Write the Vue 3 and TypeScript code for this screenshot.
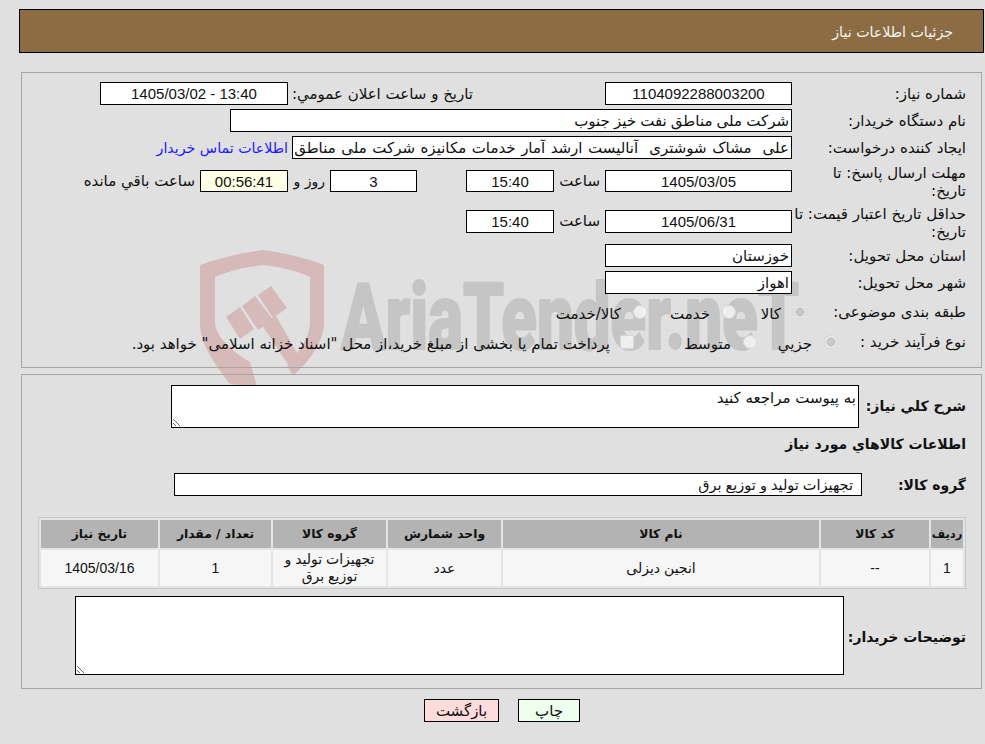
<script setup lang="ts">
const items = [
  { id: '1', code: '--', name: 'انجین دیزلی', unit: 'عدد', group: 'تجهیزات تولید و توزیع برق', qty: '1', date: '1405/03/16' },
]
const columns = ['ردیف', 'کد کالا', 'نام کالا', 'واحد شمارش', 'گروه کالا', 'تعداد / مقدار', 'تاریخ نیاز']
const widths = [32, 108, 316, 113, 113, 111, 117]
const requester = 'علی  مشاک شوشتری  آنالیست ارشد آمار خدمات مکانیزه شرکت ملی مناطق نفت خیز جنوب'
</script>

<template>
  <div class="page" dir="rtl">
    <svg class="mark" viewBox="0 0 985 744" width="985" height="744" aria-hidden="true">
      <path fill="#d6b9b9" fill-rule="evenodd" d="M263 250C285 253 306 258 324 265V325C322 345 308 362 293 376L287 366C299 352 310 338 310 322V277C295 270 280 267 263 265C246 267 231 270 215 277V322C215 336 232 352 250 362L257 387L230 384C215 365 201 345 200 325V265C220 258 241 253 263 250Z" />
      <path fill="#d6b9b9" d="M226 317L240 307L254 329L240 339ZM242 306L255 296L273 320L258 330ZM258 295L271 286L287 308L273 318ZM262 325L276 316L300 358L293 372Z" />
      <text x="341" y="349" class="mark-text" textLength="458" lengthAdjust="spacingAndGlyphs">AriaTender.neT</text>
    </svg>

    <header class="title-bar">جزئیات اطلاعات نیاز</header>

    <section class="panel top">
      <div class="row r23">
        <div class="label">شماره نیاز:</div>
        <input class="field c w187" readonly value="1104092288003200" />
        <span class="txt announce">تاریخ و ساعت اعلان عمومي:</span>
        <input class="field c w188" readonly value="1405/03/02 - 13:40" dir="ltr" />
      </div>
      <div class="row r23">
        <div class="label">نام دستگاه خریدار:</div>
        <input class="field w562" readonly value="شرکت ملی مناطق نفت خیز جنوب" />
      </div>
      <div class="row r23">
        <div class="label">ایجاد کننده درخواست:</div>
        <input class="field w500 spaced" readonly :value="requester" />
        <a class="link" href="#">اطلاعات تماس خریدار</a>
      </div>
      <div class="row tall r4">
        <div class="label">مهلت ارسال پاسخ: تا<br />تاریخ:</div>
        <input class="field c w187 h22" readonly value="1405/03/05" />
        <span class="txt unit">ساعت</span>
        <input class="field c w88 h22" readonly value="15:40" />
        <input class="field c w87 h22 days" readonly value="3" />
        <span class="txt day-unit">روز و</span>
        <input class="field c w88 h22 remain" readonly value="00:56:41" />
        <span class="txt remain-label">ساعت باقي مانده</span>
      </div>
      <div class="row tall r5">
        <div class="label">حداقل تاریخ اعتبار قیمت: تا<br />تاریخ:</div>
        <input class="field c w187" readonly value="1405/06/31" />
        <span class="txt unit">ساعت</span>
        <input class="field c w88" readonly value="15:40" />
      </div>
      <div class="row r23 r6">
        <div class="label">استان محل تحویل:</div>
        <input class="field w187" readonly value="خوزستان" />
      </div>
      <div class="row r23">
        <div class="label">شهر محل تحویل:</div>
        <input class="field w187" readonly value="اهواز" />
      </div>
      <div class="row choice r8">
        <div class="label subject">طبقه بندی موضوعی:</div>
        <span class="radio on"></span><span class="txt o1">کالا</span>
        <span class="radio"></span><span class="txt o2">خدمت</span>
        <span class="radio"></span><span class="txt">کالا/خدمت</span>
      </div>
      <div class="row choice r9">
        <div class="label short">نوع فرآیند خرید :</div>
        <span class="radio on"></span><span class="txt o3">جزيي</span>
        <span class="radio"></span><span class="txt o4">متوسط</span>
        <span class="check"></span><span class="txt">پرداخت تمام یا بخشی از مبلغ خرید،از محل "اسناد خزانه اسلامی" خواهد بود.</span>
      </div>
    </section>

    <section class="panel bottom">
      <div class="row desc">
        <div class="label b wide">شرح کلي نیاز:</div>
        <textarea class="area a1" readonly>به پیوست مراجعه کنید</textarea>
      </div>
      <h3 class="heading">اطلاعات کالاهاي مورد نیاز</h3>
      <div class="row group">
        <div class="label b g">گروه کالا:</div>
        <input class="field w688 goods" readonly value="تجهیزات تولید و توزیع برق" />
      </div>
      <table class="grid">
        <colgroup><col v-for="w in widths" :key="w" :style="{ width: w + 'px' }" /></colgroup>
        <thead><tr><th v-for="c in columns" :key="c">{{ c }}</th></tr></thead>
        <tbody>
          <tr v-for="it in items" :key="it.id">
            <td>{{ it.id }}</td><td>{{ it.code }}</td><td>{{ it.name }}</td><td>{{ it.unit }}</td>
            <td>{{ it.group }}</td><td>{{ it.qty }}</td><td>{{ it.date }}</td>
          </tr>
        </tbody>
      </table>
      <div class="row buyer">
        <div class="label b n">توضیحات خریدار:</div>
        <textarea class="area a2" readonly></textarea>
      </div>
    </section>

    <div class="actions">
      <button class="btn print">چاپ</button>
      <button class="btn back">بازگشت</button>
    </div>
  </div>
</template>

<style>
html, body { background: #e0e0e0; }
</style>

<style scoped>
.page {
  position: relative;
  width: 985px;
  height: 744px;
  box-sizing: border-box;
  padding: 9px 1px 0 0;
  overflow: hidden;
  background: #e0e0e0;
  color: #111;
  font-family: "DejaVu Sans", sans-serif;
  font-size: 15px;
}
.mark { position: absolute; left: 0; top: 0; direction: ltr; }
.mark-text {
  direction: ltr;
  text-anchor: start;
  font-family: Roboto, sans-serif;
  font-weight: 900;
  font-size: 92px;
  fill: #c5c5c5;
  stroke: #c5c5c5;
  stroke-width: 2px;
  stroke-linejoin: round;
}
.title-bar, .panel, .actions { position: relative; }
.title-bar {
  height: 44px;
  width: 965px;
  box-sizing: border-box;
  border: 1px solid #000;
  background: #8c6c42;
  color: #f6f6f6;
  line-height: 44px;
  padding-right: 30px;
  font-size: 14.2px;
}
.panel {
  width: 961px;
  margin-right: 2px;
  box-sizing: border-box;
  border: 1px solid #a6a6a6;
}
.top { height: 296px; margin-top: 19px; padding-top: 9px; }
.bottom { height: 315px; margin-top: 6px; padding-top: 10px; }
.row { display: flex; align-items: center; }
.r23 { height: 23px; margin-bottom: 4px; }
.tall { height: 36px; }
.r4 { margin-bottom: 4px; }
.r4 .label { padding-top: 2px; }
.r5 { margin-bottom: 5px; }
.r5 .label { padding-top: 4px; }
.r8 { height: 30px; margin-top: -1px; }
.r9 { height: 30px; }
.choice .txt { padding-top: 3px; }
.label { width: 189px; box-sizing: border-box; padding-right: 15px; flex: none; line-height: 18px; }
.label.subject { width: 174px; }
.label.short { width: 143px; }
.label.b { font-weight: 700; font-size: 14px; }
.label.wide { width: 122px; }
.label.g { width: 119px; }
.label.n { width: 137px; padding-top: 2px; }
.field {
  box-sizing: border-box;
  height: 23px;
  border: 1px solid #000;
  border-radius: 0;
  background: #fff;
  color: #111;
  padding: 0 2px;
  margin: 0;
  outline: none;
  text-align: right;
  font: 15px "Liberation Sans", "DejaVu Sans", sans-serif;
  flex: none;
}
.field.c { text-align: center; }
.spaced { word-spacing: 1.35px; }
.goods { padding-right: 8px; font-size: 14.5px; }
.h22 { height: 22px; }
.w187 { width: 187px; }
.w188 { width: 188px; }
.w88 { width: 88px; }
.w87 { width: 87px; }
.w562 { width: 562px; }
.w500 { width: 500px; }
.w688 { width: 688px; }
.txt { flex: none; white-space: nowrap; }
.announce { width: 180px; margin: 0 132px 0 5px; }
.link { margin-right: 4px; color: #1a1aff; text-decoration: none; font-size: 14.2px; }
.unit { width: 51px; box-sizing: border-box; padding-right: 5px; }
.days { margin-right: 49px; }
.day-unit { width: 42px; box-sizing: border-box; padding-right: 5px; font-size: 14px; }
.remain { background: #ffffe8; }
.remain-label { margin-right: 5px; }
.radio {
  width: 14px;
  height: 14px;
  box-sizing: border-box;
  border-radius: 50%;
  border: 1px solid #d6d6d6;
  background: rgba(255, 255, 255, 0.7);
  flex: none;
  margin-left: 12px;
}
.radio.on { background: radial-gradient(circle, #c8c8c8 0 4.4px, #f0f0f0 5px); }
.o1 { width: 45px; }
.o2 { width: 63px; }
.check {
  width: 14px;
  height: 14px;
  box-sizing: border-box;
  border: 1px solid #d6d6d6;
  border-radius: 2px;
  background: rgba(255, 255, 255, 0.7);
  flex: none;
  margin-left: 10px;
}
.o3 { width: 55px; }
.o4 { width: 97px; }
.desc { height: 43px; align-items: flex-start; }
.desc .label { line-height: 42px; }
.area {
  display: block;
  box-sizing: border-box;
  border: 1px solid #000;
  border-radius: 0;
  background: #fff;
  color: #111;
  margin: 0;
  padding: 3px 2px 2px;
  outline: none;
  font: 15px "DejaVu Sans", sans-serif;
  flex: none;
}
.a1 { width: 688px; height: 43px; }
.a2 { width: 769px; height: 79px; }
.heading { margin: 0; padding-right: 15px; font-size: 14px; font-weight: 700; height: 45px; line-height: 32px; }
.group { height: 23px; }
.grid {
  margin: 21px 15px 0 0;
  width: 928px;
  table-layout: fixed;
  box-sizing: border-box;
  border: 1px solid #c8c8c8;
  border-spacing: 2px;
  background: #e4e4e4;
  font-size: 13px;
}
.grid th { height: 28px; padding: 0; background: #b3b3b3; font-size: 12.3px; font-weight: 700; color: #111; }
.grid th:first-child { font-size: 11.5px; }
.grid td { height: 36px; padding: 0 8px; background: #f6f6f6; text-align: center; line-height: 17px; font-family: "Liberation Sans", "DejaVu Sans", sans-serif; font-size: 14px; }
.buyer { margin-top: 7px; height: 79px; }
.actions { display: flex; justify-content: center; gap: 19px; margin-top: 10px; padding-left: 20px; }
.btn {
  height: 23px;
  box-sizing: border-box;
  border: 1px solid #000;
  border-radius: 0;
  padding: 0;
  color: #111;
  font: 15px "DejaVu Sans", sans-serif;
}
.back { width: 75px; background: #ffdcdc; }
.print { width: 62px; background: #eeffee; }
</style>
